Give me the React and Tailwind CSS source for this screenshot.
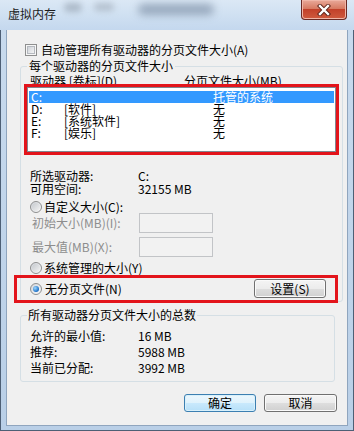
import React from "react";

const Radio = ({ checked }) => (
  <div className="w-[12px] h-[12px] rounded-full border border-[#8e8f8f] bg-linear-to-br from-[#d3d6db] to-[#fbfbfb] flex items-center justify-center shrink-0">
    {checked ? (
      <div className="w-[6px] h-[6px] rounded-full bg-[radial-gradient(circle_at_35%_35%,#9fd8ff,#1b6fc6_70%,#0d4f9a)]" />
    ) : (
      <div className="w-[8px] h-[8px] rounded-full bg-linear-to-br from-[#c6cacf] to-[#f2f2f2]" />
    )}
  </div>
);

const Checkbox = () => (
  <div className="w-[12px] h-[12px] border border-[#8e8f8f] bg-[#f6f6f6] flex items-center justify-center shrink-0">
    <div className="w-[8px] h-[8px] border border-[#b5b9bf] bg-linear-to-br from-[#cfd3d9] to-[#f4f4f4]" />
  </div>
);

const Btn = ({ children, primary, w }) => (
  <div
    className={
      primary
        ? "h-[18px] rounded-[3px] border border-[#3c7fb1] bg-[linear-gradient(#ecf7fd,#dff2fc_50%,#c9e9fc_50%,#b7e0f8)] shadow-[inset_0_0_0_1px_#d8f0fb] flex items-center justify-center text-[12px] leading-[14px] text-black"
        : "h-[18px] rounded-[3px] border border-[#707070] bg-[linear-gradient(#f4f4f4,#ececec_50%,#dedede_50%,#d0d0d0)] shadow-[inset_0_0_0_1px_#fafafa] flex items-center justify-center text-[12px] leading-[14px] text-black"
    }
    style={{ width: w }}
  >
    {children}
  </div>
);

export default function App() {
  return (
    <div className="w-[354px] h-[431px] relative overflow-hidden bg-linear-to-b from-[#c9dbee] to-[#b9cfe7] font-['Noto_Sans_CJK_SC',sans-serif] text-[12px] text-black shadow-[inset_0_0_0_1px_#4d5f75]">
      {/* title bar */}
      <div className="h-[30px] relative bg-linear-to-b from-[#dbe8f5] to-[#c4d8ee]">
        <div className="absolute left-[64px] top-[3px] w-[18px] h-[9px] rounded-full bg-[#9aa7b6] blur-[3px] opacity-70" />
        <div className="absolute left-[94px] top-[3px] w-[20px] h-[8px] rounded-full bg-[#9ea9b6] blur-[3px] opacity-60" />
        <div className="absolute left-[138px] top-[4px] w-[76px] h-[11px] rounded-full bg-[#7c8ea5] blur-[4px] opacity-70" />
        <div className="relative pl-[8px] pt-[6px] text-[12px] leading-[16px] text-[#1b1b1b]">虚拟内存</div>
        <div className="absolute right-[7px] top-0 w-[46px] h-[20px] rounded-b-[4px] border border-t-0 border-[#6a2a24] bg-[linear-gradient(#e9a99a,#d77a62_45%,#c2412a_50%,#cf5a3e)] shadow-[inset_0_0_0_1px_#f0b6a8] flex items-center justify-center">
          <svg width="14" height="12" viewBox="0 0 14 12">
            <path d="M3 2 L11 10 M11 2 L3 10" stroke="#5a2018" strokeWidth="4.2" strokeLinecap="square" />
            <path d="M3 2 L11 10 M11 2 L3 10" stroke="#ffffff" strokeWidth="2.4" strokeLinecap="square" />
          </svg>
        </div>
      </div>

      {/* content */}
      <div className="ml-[7px] w-[340px] h-[395px] bg-[#f0f0f0] shadow-[0_0_0_1px_#8fa5be] flex flex-col">
        <div className="mt-[13px] h-[14px] flex items-center pl-[18px] gap-[4px] leading-[14px]">
          <Checkbox />
          <span>自动管理所有驱动器的分页文件大小(A)</span>
        </div>

        <fieldset className="mt-[2px] ml-[13px] w-[323px] border border-[#d5dfe5] rounded-[3px] px-[6px] pb-[3px]">
          <legend className="px-[2px] leading-[14px] text-[12px]">每个驱动器的分页文件大小</legend>
          <div className="mt-[2px] h-[12px] leading-[12px] flex pl-[3px] overflow-visible">
            <span className="w-[154px] shrink-0">驱动器 [卷标](D)</span>
            <span>分页文件大小(MB)</span>
          </div>
          <div className="relative h-[65px] border border-[#828790] bg-white px-[1px] py-[3px]">
            {[
              ["C:", "", "托管的系统", true],
              ["D:", "[软件]", "无", false],
              ["E:", "[系统软件]", "无", false],
              ["F:", "[娱乐]", "无", false],
            ].map(([d, l, s, sel]) => (
              <div
                key={d}
                className={
                  sel
                    ? "h-[12px] leading-[12px] flex bg-[#3399ff] text-white"
                    : "h-[12px] leading-[12px] flex text-black"
                }
              >
                <span className="w-[35px] pl-[2px] shrink-0">{d}</span>
                <span className="w-[149px] shrink-0">{l}</span>
                <span>{s}</span>
              </div>
            ))}
            <div className="absolute -inset-[4px] border-[3px] border-[#e3141b] pointer-events-none" />
          </div>

          <div className="mt-[17px] pl-[3px]">
            <div className="h-[13px] leading-[13px] flex">
              <span className="w-[108px] shrink-0">所选驱动器:</span>
              <span>C:</span>
            </div>
            <div className="h-[13px] leading-[13px] flex">
              <span className="w-[108px] shrink-0">可用空间:</span>
              <span>32155 MB</span>
            </div>
          </div>

          <div className="mt-[6px] h-[12px] flex items-center gap-[2px] pl-[3px] leading-[12px]">
            <Radio />
            <span>自定义大小(C):</span>
          </div>
          <div className="h-[20px] flex items-center pl-[5px] text-[#8d8d8d]">
            <span className="w-[107px] shrink-0">初始大小(MB)(I):</span>
            <div className="w-[74px] h-[20px] border border-[#c2c4c7] bg-[#f2f2f2]" />
          </div>
          <div className="mt-[4px] h-[20px] flex items-center pl-[5px] text-[#8d8d8d]">
            <span className="w-[107px] shrink-0">最大值(MB)(X):</span>
            <div className="w-[74px] h-[20px] border border-[#c2c4c7] bg-[#f2f2f2]" />
          </div>
          <div className="mt-[5px] h-[12px] flex items-center gap-[2px] pl-[3px] leading-[12px]">
            <Radio />
            <span>系统管理的大小(Y)</span>
          </div>
          <div className="mt-[5px] h-[19px] relative flex items-center justify-between pl-[3px] pr-[10px]">
            <div className="flex items-center gap-[3px] leading-[14px]">
              <Radio checked />
              <span>无分页文件(N)</span>
            </div>
            <div className="w-[72px] h-[19px] rounded-[3px] border border-[#707070] bg-[linear-gradient(#f4f4f4,#ececec_50%,#dedede_50%,#d0d0d0)] shadow-[inset_0_0_0_1px_#fafafa] flex items-center justify-center leading-[14px]">
              设置(S)
            </div>
            <div className="absolute -left-[13px] -right-[2px] -top-[4px] -bottom-[5px] border-[3px] border-[#e3141b] pointer-events-none" />
          </div>
        </fieldset>

        <fieldset className="mt-[6px] ml-[13px] w-[315px] border border-[#d5dfe5] rounded-[3px] px-[6px] pb-[5px]">
          <legend className="px-[1px] leading-[14px] text-[12px]">所有驱动器分页文件大小的总数</legend>
          <div className="mt-[6px] pl-[3px]">
            {[
              ["允许的最小值:", "16 MB"],
              ["推荐:", "5988 MB"],
              ["当前已分配:", "3992 MB"],
            ].map(([a, b]) => (
              <div key={a} className="h-[16px] leading-[16px] flex">
                <span className="w-[108px] shrink-0">{a}</span>
                <span>{b}</span>
              </div>
            ))}
          </div>
        </fieldset>

        <div className="mt-[12px] flex justify-end gap-[8px] pr-[10px]">
          <Btn primary w={72}>确定</Btn>
          <Btn w={73}>取消</Btn>
        </div>
      </div>
    </div>
  );
}
